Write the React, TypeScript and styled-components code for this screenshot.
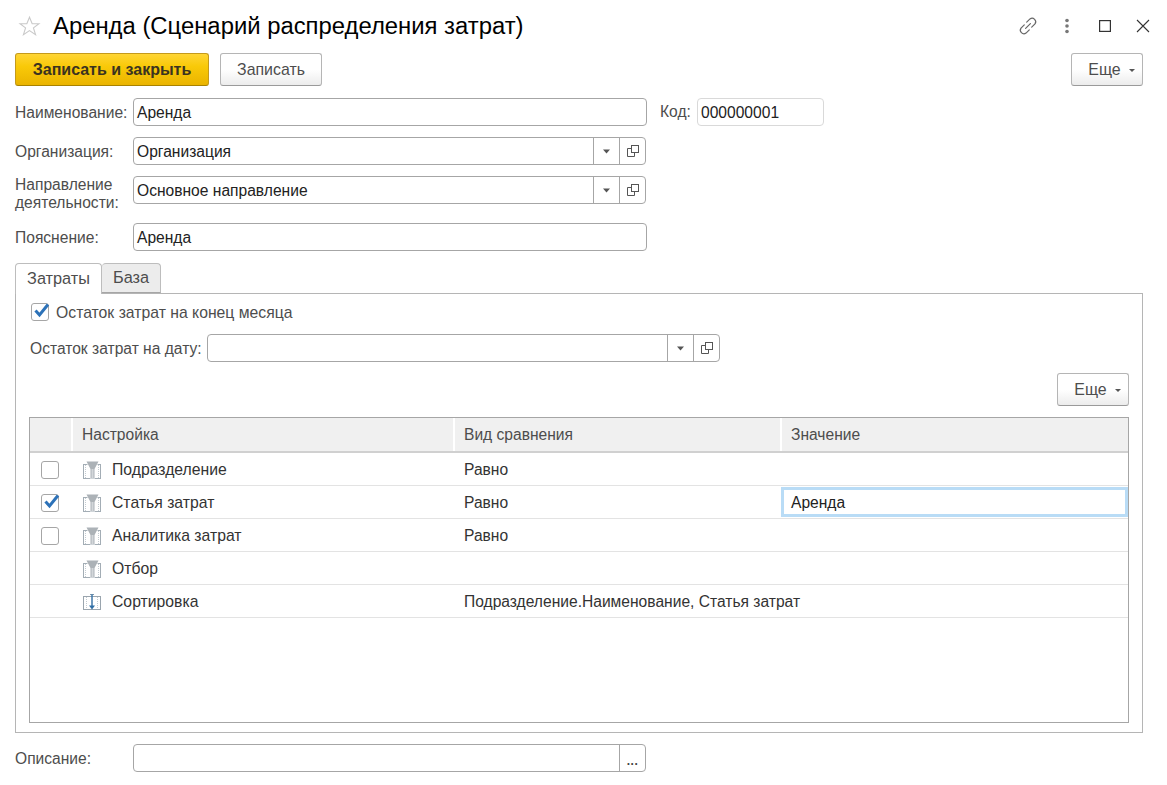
import React from "react";
import styled, { createGlobalStyle } from "styled-components";

const Global = createGlobalStyle`
  html, body { margin: 0; padding: 0; background: #fff; }
  body { font-family: "Liberation Sans", Arial, sans-serif; font-size: 15.6px; color: #333; }
  * { box-sizing: border-box; }
`;

const Page = styled.div`
  width: 1167px;
  height: 785px;
  overflow: hidden;
  padding: 0 24px 0 15px;
  display: flex;
  flex-direction: column;
`;

const TitleBar = styled.div`
  height: 53px;
  margin-right: -24px;
  display: flex;
  align-items: center;
  padding-bottom: 1px;
`;

const StarIcon = styled.svg`
  margin-left: 3px;
  flex: none;
`;

const Title = styled.h1`
  margin: 0 0 0 12px;
  font-size: 23.85px;
  font-weight: 400;
  color: #000;
  flex: 1;
  white-space: nowrap;
`;

const WindowIcons = styled.div`
  display: flex;
  align-items: center;
  margin-right: 5px;
`;

const IconSlot = styled.span<{ $w: number }>`
  width: ${(p) => p.$w}px;
  height: 24px;
  display: flex;
  align-items: center;
  justify-content: center;
`;

const Toolbar = styled.div`
  display: flex;
  gap: 11px;
  height: 33px;
`;

const Spacer = styled.div`
  flex: 1;
`;

const Btn = styled.button<{ $w: number; $primary?: boolean }>`
  width: ${(p) => p.$w}px;
  height: 33px;
  padding: 0;
  border-radius: 3px;
  font-family: inherit;
  font-size: ${(p) => (p.$primary ? 16 : 15.9)}px;
  display: flex;
  align-items: center;
  justify-content: center;
  gap: 7px;
  border: 1px solid ${(p) => (p.$primary ? "#c49a1c" : "#b5b5b5")};
  border-bottom-color: ${(p) => (p.$primary ? "#a88200" : "#9a9a9a")};
  color: ${(p) => (p.$primary ? "#3a3320" : "#4d4d4d")};
  font-weight: ${(p) => (p.$primary ? 700 : 400)};
  background: ${(p) =>
    p.$primary
      ? "linear-gradient(#ffd535, #f9c908 40%, #eab400)"
      : "linear-gradient(#ffffff, #ffffff 50%, #ececec)"};
`;

const MoreBtn = styled(Btn)`
  padding-left: 9px;
`;

const Caret = styled.span`
  width: 0;
  height: 0;
  margin-left: 1px;
  margin-top: 2px;
  border-left: 3px solid transparent;
  border-right: 3px solid transparent;
  border-top: 3px solid #555;
`;

const MoreRow = styled.div`
  display: flex;
  justify-content: flex-end;
`;

const FormRow = styled.div<{ $top: number }>`
  display: flex;
  align-items: center;
  height: 28px;
  margin-top: ${(p) => p.$top}px;
`;

const Label = styled.label<{ $w: number; $tight?: boolean }>`
  width: ${(p) => p.$w}px;
  flex: none;
  color: #4d4d4d;
  white-space: nowrap;
  line-height: 18px;
  padding-top: ${(p) => (p.$tight ? 8 : 2)}px;
`;

const Field = styled.div<{ $w: number; $soft?: boolean }>`
  width: ${(p) => p.$w}px;
  height: 28px;
  flex: none;
  display: flex;
  border: 1px solid ${(p) => (p.$soft ? "#d9d9d9" : "#a6a6a6")};
  border-radius: 4px;
  background: #fff;
`;

const FieldText = styled.div`
  flex: 1;
  padding: 0 3px;
  line-height: 27px;
  color: #222;
  white-space: nowrap;
  overflow: hidden;
`;

const FieldBtn = styled.div`
  width: 26px;
  flex: none;
  border-left: 1px solid #a6a6a6;
  display: flex;
  align-items: center;
  justify-content: center;
`;

const Dots = styled.span`
  font-weight: 700;
  font-size: 12px;
  color: #444;
  letter-spacing: 0.5px;
  padding-top: 5px;
`;

const CodeLabel = styled.label`
  margin-left: 13px;
  width: 37px;
  color: #4d4d4d;
`;

const Tabs = styled.div`
  display: flex;
  margin-top: 12px;
  height: 31px;
  position: relative;
  z-index: 1;
`;

const Tab = styled.div<{ $active?: boolean; $w: number }>`
  width: ${(p) => p.$w}px;
  height: ${(p) => (p.$active ? 31 : 30)}px;
  border: 1px solid #bdbdbd;
  border-left-width: ${(p) => (p.$active ? 1 : 0)}px;
  border-bottom: ${(p) => (p.$active ? "none" : "1px solid #a6a6a6")};
  border-radius: 4px 4px 0 0;
  background: ${(p) => (p.$active ? "#fff" : "#ececec")};
  display: flex;
  align-items: center;
  justify-content: center;
  color: #4d4d4d;
  font-size: 16.3px;
  padding-bottom: 1px;
`;

const Panel = styled.div`
  height: 440px;
  margin-top: -1px;
  border: 1px solid #b5b5b5;
  padding: 0 13px;
  display: flex;
  flex-direction: column;
`;

const CheckRow = styled.div`
  display: flex;
  align-items: center;
  height: 18px;
  margin-top: 9px;
  margin-left: 2px;
  gap: 7px;
  color: #4d4d4d;
  font-size: 15.75px;
`;

const CheckText = styled.span`
  padding-top: 2px;
`;

const Box = styled.span`
  width: 18px;
  height: 18px;
  flex: none;
  border: 1px solid #a6a6a6;
  border-radius: 3px;
  background: #fff;
  display: block;
  position: relative;
`;

const Tick = styled.svg`
  position: absolute;
  left: 1px;
  top: -3px;
`;

const PanelField = styled(FormRow)`
  margin-left: 1px;
`;

const PanelMore = styled(MoreRow)`
  margin-top: 11px;
`;

const Table = styled.div`
  margin-top: 11px;
  height: 306px;
  border: 1px solid #a6a6a6;
  overflow: hidden;
`;

const Grid = styled.div`
  display: grid;
  grid-template-columns: 41px 382px 327px 1fr;
  height: 33px;
  border-bottom: 1px solid #e3e3e3;
`;

const HeadGrid = styled(Grid)`
  height: 35px;
  background: #f0f0f0;
  border-bottom: 2px solid #d0d0d0;
`;

const HeadCell = styled.div`
  padding-left: 9px;
  line-height: 33px;
  color: #4d4d4d;
  border-left: 2px solid #fff;
  &:first-child { border-left: none; }
`;

const Cell = styled.div`
  line-height: 33px;
  color: #333;
  white-space: nowrap;
  display: flex;
  align-items: center;
`;

const CheckCell = styled(Cell)`
  padding-left: 11px;
`;

const NameCell = styled(Cell)`
  padding-left: 11px;
  gap: 10px;
  font-size: 15.75px;
`;

const FocusCell = styled.div`
  margin: 1px 0 1px 1px;
  padding-left: 7px;
  height: 30px;
  border: 3px solid #b9dcf6;
  line-height: 26px;
  color: #222;
`;

const ValueCell = styled(Cell)`
  padding-left: 11px;
`;

const LinkIcon = () => (
  <svg width="24" height="24" viewBox="0 0 22 22" fill="none" stroke="#666" strokeWidth="1.1" strokeLinecap="round">
    <path d="M8.800 13.200l4.400-4.400" />
    <path d="M7.600 9.900l-3 3a3.300 3.300 0 0 0 4.600 4.600l3-3" />
    <path d="M14.400 12.100l3-3a3.300 3.300 0 0 0-4.600-4.600l-3 3" />
  </svg>
);

const MoreIcon = () => (
  <svg width="6" height="16" viewBox="0 0 6 16" fill="#777">
    <circle cx="3" cy="2.500" r="1.800" />
    <circle cx="3" cy="8" r="1.800" />
    <circle cx="3" cy="13.500" r="1.800" />
  </svg>
);

const CopyIcon = () => (
  <svg width="14" height="14" viewBox="0 0 14 14" fill="none" stroke="#555" strokeWidth="1">
    <rect x="5.500" y="1.500" width="7" height="7" />
    <path d="M5.500 4.500h-4v8h7v-4" />
  </svg>
);

const DropArrow = () => (
  <svg width="7" height="5" viewBox="0 0 7 5" fill="#555">
    <path d="M0 0.500h7L3.500 4.500z" />
  </svg>
);

const FilterIcon = () => (
  <svg width="20" height="20" viewBox="0 0 20 20" fill="none">
    <rect x="1.500" y="4.500" width="17" height="14" fill="#fff" stroke="#a3adb5" />
    <path d="M3.500 5v13M16.500 5v13" stroke="#c3cbd1" strokeDasharray="1 1" />
    <path d="M3.500 1h14l-4.500 8v9.500H8V9z" fill="#fff" />
    <path d="M4.500 1.500h12L12.500 9v9h-4V9z" fill="#acb2b7" />
    <path d="M9.500 9v9h2V9z" fill="#d3d7da" />
  </svg>
);

const SortIcon = () => (
  <svg width="20" height="20" viewBox="0 0 20 20" fill="none">
    <rect x="1.500" y="4.500" width="17" height="13" fill="#fff" stroke="#9aa5ae" />
    <path d="M4.500 5v12M15.500 5v12" stroke="#c3cbd1" strokeDasharray="1 1" />
    <path d="M8 2.500h4" stroke="#7d97ad" />
    <path d="M10 2.500v12" stroke="#3f77a8" strokeWidth="1.500" />
    <path d="M7 13.500h6l-3 4z" fill="#2f6ea5" />
  </svg>
);

const Check = ({ checked }: { checked?: boolean }) => (
  <Box>
    {checked && (
      <Tick width="18" height="18" viewBox="0 0 18 18" fill="none">
        <path d="M2.500 9.500l4 4.500L15 3.500" stroke="#2d72b8" strokeWidth="3" />
      </Tick>
    )}
  </Box>
);

const rows = [
  { name: "Подразделение", check: "off", cmp: "Равно", icon: "f" },
  { name: "Статья затрат", check: "on", cmp: "Равно", icon: "f", value: "Аренда" },
  { name: "Аналитика затрат", check: "off", cmp: "Равно", icon: "f" },
  { name: "Отбор", icon: "f", cmp: "" },
  { name: "Сортировка", icon: "s", cmp: "Подразделение.Наименование, Статья затрат" },
];

const SelectField = ({ w, value }: { w: number; value: string }) => (
  <Field $w={w}>
    <FieldText>{value}</FieldText>
    <FieldBtn><DropArrow /></FieldBtn>
    <FieldBtn><CopyIcon /></FieldBtn>
  </Field>
);

export default function App() {
  return (
    <Page>
      <Global />
      <TitleBar>
        <StarIcon width="23" height="22" viewBox="0 0 25 24" fill="none" stroke="#c9c9c9" strokeWidth="1.200">
          <path d="M12.500 2.500l2.900 7h7.400l-6 4.600 2.300 7.400-6.600-4.500-6.600 4.500 2.300-7.400-6-4.600h7.400z" />
        </StarIcon>
        <Title>Аренда (Сценарий распределения затрат)</Title>
        <WindowIcons>
          <IconSlot $w={40}><LinkIcon /></IconSlot>
          <IconSlot $w={38}><MoreIcon /></IconSlot>
          <IconSlot $w={38}>
            <svg width="12" height="12" viewBox="0 0 12 12" fill="none" stroke="#333" strokeWidth="1.200">
              <rect x="0.600" y="0.600" width="10.800" height="10.800" />
            </svg>
          </IconSlot>
          <IconSlot $w={38}>
            <svg width="14" height="14" viewBox="0 0 14 14" fill="none" stroke="#333" strokeWidth="1.100">
              <path d="M1 1l12 12M13 1L1 13" />
            </svg>
          </IconSlot>
        </WindowIcons>
      </TitleBar>

      <Toolbar>
        <Btn $w={194} $primary>Записать и закрыть</Btn>
        <Btn $w={102}>Записать</Btn>
        <Spacer />
        <MoreBtn $w={72}>Еще <Caret /></MoreBtn>
      </Toolbar>

      <FormRow $top={12}>
        <Label $w={118}>Наименование:</Label>
        <Field $w={514}><FieldText>Аренда</FieldText></Field>
        <CodeLabel>Код:</CodeLabel>
        <Field $w={127} $soft><FieldText>000000001</FieldText></Field>
      </FormRow>
      <FormRow $top={11}>
        <Label $w={118}>Организация:</Label>
        <SelectField w={513} value="Организация" />
      </FormRow>
      <FormRow $top={11}>
        <Label $w={118} $tight>Направление<br />деятельности:</Label>
        <SelectField w={513} value="Основное направление" />
      </FormRow>
      <FormRow $top={19}>
        <Label $w={118}>Пояснение:</Label>
        <Field $w={514}><FieldText>Аренда</FieldText></Field>
      </FormRow>

      <Tabs>
        <Tab $active $w={87}>Затраты</Tab>
        <Tab $w={59}>База</Tab>
      </Tabs>
      <Panel>
        <CheckRow><Check checked /><CheckText>Остаток затрат на конец месяца</CheckText></CheckRow>
        <PanelField $top={13}>
          <Label $w={177}>Остаток затрат на дату:</Label>
          <SelectField w={513} value="" />
        </PanelField>
        <PanelMore><MoreBtn $w={72}>Еще <Caret /></MoreBtn></PanelMore>
        <Table>
          <HeadGrid>
            <HeadCell />
            <HeadCell>Настройка</HeadCell>
            <HeadCell>Вид сравнения</HeadCell>
            <HeadCell>Значение</HeadCell>
          </HeadGrid>
          {rows.map((r) => (
            <Grid key={r.name}>
              <CheckCell>{r.check && <Check checked={r.check === "on"} />}</CheckCell>
              <NameCell>{r.icon === "f" ? <FilterIcon /> : <SortIcon />}{r.name}</NameCell>
              <ValueCell>{r.cmp}</ValueCell>
              {r.value ? <FocusCell>{r.value}</FocusCell> : <div />}
            </Grid>
          ))}
        </Table>
      </Panel>

      <FormRow $top={11}>
        <Label $w={118}>Описание:</Label>
        <Field $w={513}>
          <FieldText />
          <FieldBtn><Dots>...</Dots></FieldBtn>
        </Field>
      </FormRow>
    </Page>
  );
}
